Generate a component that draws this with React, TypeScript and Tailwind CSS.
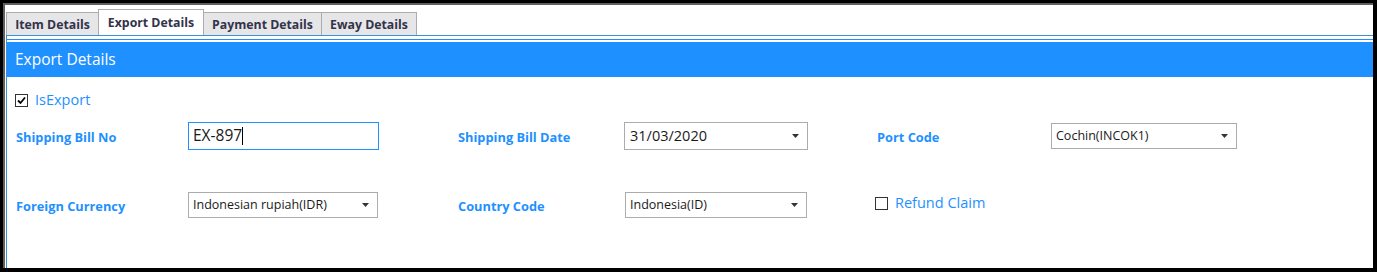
const labelCls = "pt-[4px] text-[12.8px] font-bold text-[#1e90ff]";

function Arrow() {
  return (
    <svg width="7" height="4" viewBox="0 0 7 4" className="shrink-0">
      <polygon points="0,0 7,0 3.5,4" fill="#333" />
    </svg>
  );
}

function Select({ value, className, text = "text-[12.5px]" }: { value: string; className: string; text?: string }) {
  return (
    <div className={`flex items-center justify-between border border-[#acacac] bg-white pl-[4px] pr-[8px] ${className}`}>
      <span className={`${text} text-[#1a1a1a]`}>{value}</span>
      <Arrow />
    </div>
  );
}

function Check({ checked }: { checked?: boolean }) {
  return (
    <span className="flex h-[13px] w-[13px] shrink-0 items-center justify-center border border-[#333] bg-white">
      {checked && (
        <svg width="9" height="9" viewBox="0 0 9 9">
          <path d="M1 4.5 L3.5 7 L8 1.5" stroke="#000" strokeWidth="1.8" fill="none" />
        </svg>
      )}
    </span>
  );
}

const tabs = [
  { label: "Item Details", w: "w-[93px]" },
  { label: "Export Details", w: "w-[106px]", active: true },
  { label: "Payment Details", w: "w-[119px]" },
  { label: "Eway Details", w: "w-[96px]" },
];

export default function App() {
  return (
    <div className="h-[272px] w-[1377px] bg-black pl-[3px] pt-[3px] font-['Open_Sans',sans-serif]">
      <div className="h-[265px] w-[1370px] border-l-2 border-t-2 border-[#5f5f5f] bg-white">
        {/* tab strip */}
        <div className="flex h-[30px] items-end pl-[1px]">
          {tabs.map((t) => (
            <div
              key={t.label}
              className={`-mr-px flex items-center justify-center border border-b-0 border-[#acacac] pt-[2px] text-[12.3px] font-bold text-[#33334a] ${t.w} ${
                t.active ? "relative z-10 h-[26px] bg-white" : "h-[23px] bg-[#e6e6e9]"
              }`}
            >
              {t.label}
            </div>
          ))}
        </div>

        {/* panel */}
        <div className="ml-px h-[233px] border-l border-t border-[#3f8fd6]">
          <div className="mt-[3px] border-t border-[#1e90ff] pt-[2px]">
            <div className="flex h-[35px] items-center bg-[#1e90ff] pl-[8px] pt-[1px] text-[15.5px] text-white">
              Export Details
            </div>
          </div>

          <div className="pl-[9px]">
            <div className="-ml-px mt-[13px] flex h-[20px] items-center gap-[7px]">
              <Check checked />
              <span className="text-[14.5px] text-[#1e90ff]">IsExport</span>
            </div>

            <div className="mt-[12px] grid h-[28px] grid-cols-[172px_270px_166px_253px_174px_186px] items-center">
              <span className={labelCls}>Shipping Bill No</span>
              <div className="flex h-[28px] w-[191px] items-center border border-[#1e90ff] pl-[4px]">
                <span className="text-[15.5px] text-[#1a1a1a]">EX-897</span>
                <span className="h-[18px] w-px bg-black" />
              </div>
              <span className={labelCls}>Shipping Bill Date</span>
              <Select value="31/03/2020" className="h-[28px] w-[184px] pl-[5px]" text="text-[14.5px]" />
              <span className={labelCls}>Port Code</span>
              <Select value="Cochin(INCOK1)" className="h-[26px] w-[186px]" />
            </div>

            <div className="mt-[41px] grid h-[28px] grid-cols-[172px_270px_166px_253px_174px_186px] items-center">
              <span className={labelCls}>Foreign Currency</span>
              <Select value="Indonesian rupiah(IDR)" className="h-[26px] w-[190px]" />
              <span className={labelCls}>Country Code</span>
              <Select value="Indonesia(ID)" className="ml-px h-[26px] w-[182px]" />
              <div className="-ml-[2px] -mt-[4px] flex items-center gap-[7px]">
                <Check />
                <span className="text-[14.5px] text-[#1e90ff]">Refund Claim</span>
              </div>
              <span />
            </div>
          </div>
        </div>
      </div>
    </div>
  );
}
